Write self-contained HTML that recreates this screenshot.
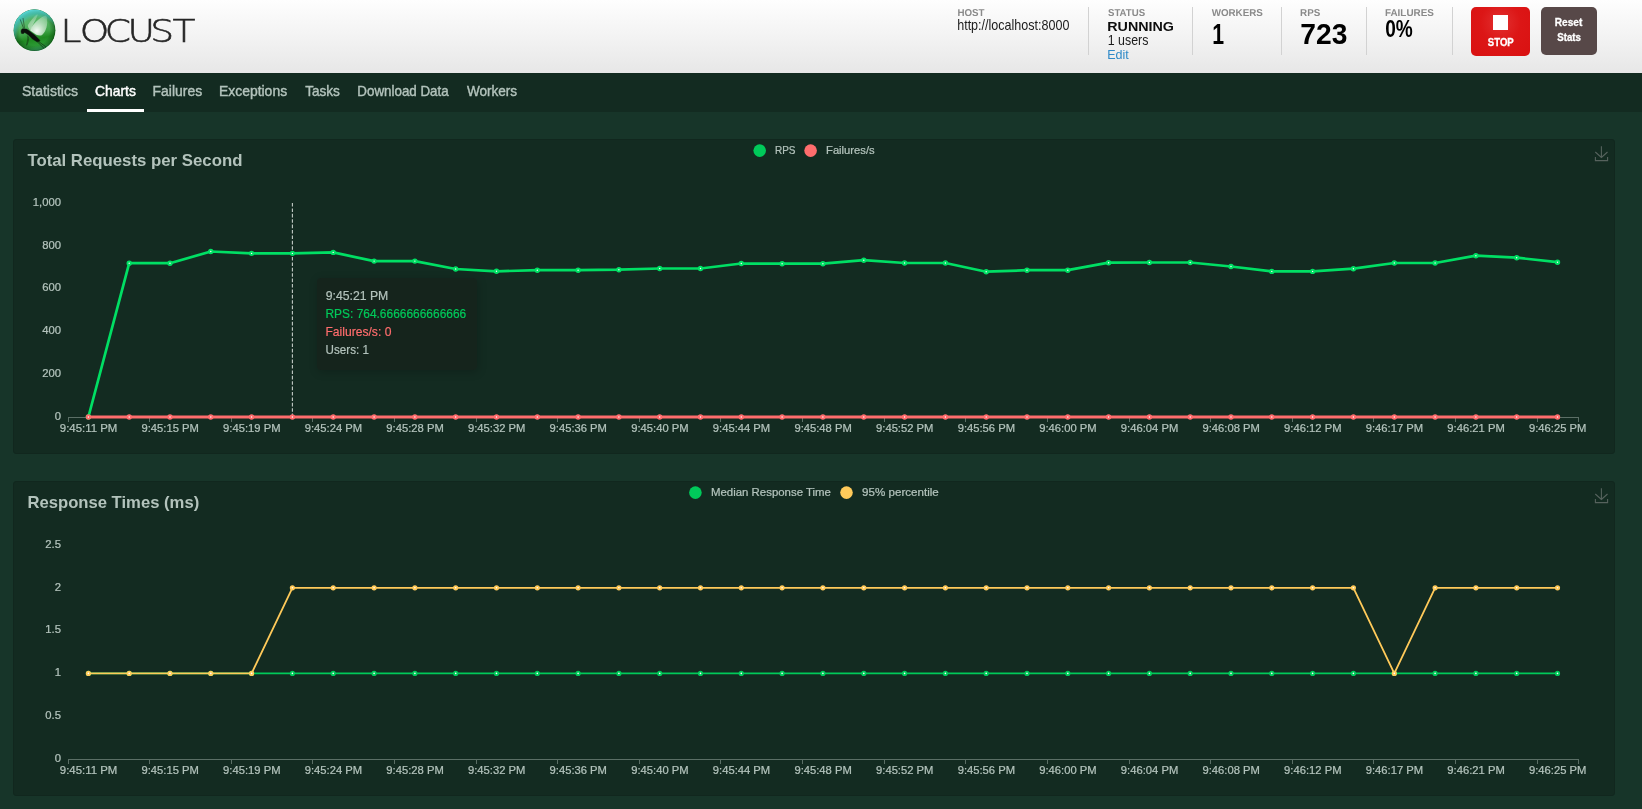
<!DOCTYPE html>
<html lang="en"><head><meta charset="utf-8"><title>Locust</title>
<style>
html,body{margin:0;padding:0}
body{width:1642px;height:809px;overflow:hidden;background:#173529;position:relative;font-family:"Liberation Sans",Arial,sans-serif;color:#000}
.abs{position:absolute;white-space:nowrap;line-height:1}
#top{position:absolute;left:0;top:0;width:1642px;height:72.5px;background:linear-gradient(to bottom,#fefefe 0%,#f4f4f4 45%,#e7e7e7 100%)}
#nav{position:absolute;left:0;top:72.5px;width:1642px;height:39.5px;background:#132b21}
.div{position:absolute;top:7px;width:1px;height:48px;background:#d2d2d2}
.panel{position:absolute;left:13px;width:1600px;height:313px;background:#132b21;border:1px solid #11271e;border-radius:3px}
svg text{font-family:"Liberation Sans",sans-serif}
svg{position:absolute;left:0;top:0}
</style></head><body>
<div id="top"></div>
<div id="nav"></div>

<!-- logo -->
<svg width="220" height="72" viewBox="0 0 220 72" style="will-change:transform">
<defs>
<linearGradient id="sph" gradientUnits="userSpaceOnUse" x1="30" y1="9" x2="38" y2="52">
<stop offset="0" stop-color="#4aa860"/><stop offset="0.3" stop-color="#58b768"/><stop offset="0.55" stop-color="#41a54a"/><stop offset="0.7" stop-color="#1f8a20"/><stop offset="0.86" stop-color="#2c9a36"/><stop offset="1" stop-color="#4fc094"/>
</linearGradient>
<radialGradient id="edge" gradientUnits="userSpaceOnUse" cx="34.6" cy="30.3" r="21"><stop offset="0.72" stop-color="#0b3d10" stop-opacity="0"/><stop offset="0.93" stop-color="#0b4a12" stop-opacity="0.45"/><stop offset="1" stop-color="#07300c" stop-opacity="0.75"/></radialGradient>
<radialGradient id="rim" gradientUnits="userSpaceOnUse" cx="38" cy="39" r="29.600"><stop offset="0.7" stop-color="#46c7c4" stop-opacity="0"/><stop offset="0.86" stop-color="#46c7c4" stop-opacity="0.7"/><stop offset="1" stop-color="#5ad6d6" stop-opacity="1"/></radialGradient>
<radialGradient id="wg" gradientUnits="userSpaceOnUse" cx="37" cy="31" r="18"><stop offset="0" stop-color="#fff" stop-opacity="0.95"/><stop offset="0.45" stop-color="#fff" stop-opacity="0.55"/><stop offset="1" stop-color="#fff" stop-opacity="0.12"/></radialGradient>
<clipPath id="cc"><circle cx="34.6" cy="30.3" r="21"/></clipPath>
</defs>
<g transform="translate(34.5 30.2) scale(0.996) translate(-34.6 -30.3)"><circle cx="34.6" cy="30.3" r="21" fill="url(#sph)"/>
<g clip-path="url(#cc)">
<circle cx="34.6" cy="30.3" r="21" fill="url(#edge)"/>
<circle cx="34.6" cy="30.3" r="21" fill="url(#rim)"/>
<path d="M30.500 31C28.500 28.500 27.600 26.500 28 25.200C30.500 21 34 16.500 37.200 14.200L37.900 14.900C36.500 18.500 34.500 22.500 32.400 26L31.500 31z" fill="url(#wg)" opacity="0.8"/>
<path d="M31 31C31.500 28.500 32.200 26.500 33.100 25.200C37 20.500 41.500 16.800 45.900 15.600C47.300 17 47.600 18.500 47.200 20.100C47.600 23.500 47.100 27 45.900 29.700C44.900 32.500 43.300 34.600 41.400 35.500C39.600 35.900 37.800 35.500 36.300 34.800z" fill="url(#wg)"/>
</g>
<path d="M21.400 29.900L22.600 28.900L26.500 29.200L28.600 30.400L35 35.400L40 40.500L39.600 41.500L37 41.900L32.600 39.200L28.200 34.800L24.800 32.700L23.200 33.800L21.500 33.500L21.100 31.600z" fill="#0a100b" stroke="#0a100b" stroke-width="0.4" stroke-linejoin="round"/>
<path d="M23.700 28.600L20.200 19.400M24.600 28.500L23.100 18.100" fill="none" stroke="#0a100b" stroke-width="0.55" opacity="0.8"/>
<path d="M27.300 35.500c1.500 3.500-0.500 6.500-0.700 10.300M28.600 36.500c0.700 3-0.700 6-1.500 8.500" fill="none" stroke="#0a100b" stroke-width="0.5" opacity="0.75"/>
<path d="M37 41.500L44 48.300M38.500 41.500L46 47" fill="none" stroke="#0a100b" stroke-width="0.65" opacity="0.85"/>
</g><text id="logotxt" transform="translate(60.4 42) scale(1.18 1)" font-size="31.85" letter-spacing="-2.71" dx="0 2.54 -1.1 -0.34 -1.44 1.44" style="font-family:'DejaVu Sans Light','DejaVu Sans',sans-serif;font-weight:200" fill="#262626" stroke="#262626" stroke-width="0.55">LOCUST</text>
</svg>

<!-- header -->
<div class="div" style="left:1088px"></div>
<div class="div" style="left:1192px"></div>
<div class="div" style="left:1281px"></div>
<div class="div" style="left:1366px"></div>
<div class="div" style="left:1452px"></div>
<div class="abs" style="left:1471px;top:7px;width:59px;height:49px;border-radius:5px;background:radial-gradient(circle at 50% 32%,#e23030 0%,#dc1616 45%,#d91111 100%)"></div>
<div class="abs" style="left:1493px;top:15px;width:15px;height:15px;background:#fff"></div>
<div class="abs" style="left:1541px;top:7px;width:56px;height:48px;border-radius:5px;background:#574848"></div>
<svg width="1642" height="72" viewBox="0 0 1642 72"><text transform="translate(957.39 15.65) scale(0.9776 1)" font-size="10.00" font-weight="bold" fill="#8a8a8a" text-rendering="geometricPrecision">HOST</text><text transform="translate(957.17 29.64) scale(0.8886 1)" font-size="14.14" fill="#1c1c1c">http://localhost:8000</text><text transform="translate(1107.96 15.75) scale(0.9648 1)" font-size="10.00" font-weight="bold" fill="#8a8a8a" text-rendering="geometricPrecision">STATUS</text><text transform="translate(1107.28 31.25) scale(1.0520 1)" font-size="13.60" font-weight="bold" fill="#0d0d0d">RUNNING</text><text transform="translate(1107.72 44.55) scale(0.8769 1)" font-size="14.14" fill="#1c1c1c">1 users</text><text transform="translate(1107.21 58.85) scale(0.9836 1)" font-size="12.77" fill="#2f8ac8">Edit</text><text transform="translate(1211.63 15.75) scale(0.9806 1)" font-size="10.00" font-weight="bold" fill="#8a8a8a" text-rendering="geometricPrecision">WORKERS</text><text transform="translate(1212.22 43.85) scale(0.7252 1)" font-size="29.36" font-weight="bold" fill="#000">1</text><text transform="translate(1300.09 15.75) scale(0.9845 1)" font-size="10.00" font-weight="bold" fill="#8a8a8a" text-rendering="geometricPrecision">RPS</text><text transform="translate(1300.35 43.55) scale(0.9287 1)" font-size="30.41" font-weight="bold" fill="#000">723</text><text transform="translate(1384.98 15.75) scale(0.9880 1)" font-size="10.00" font-weight="bold" fill="#8a8a8a" text-rendering="geometricPrecision">FAILURES</text><text transform="translate(1385.19 36.85) scale(0.8128 1)" font-size="23.49" font-weight="bold" fill="#000">0%</text><text transform="translate(1487.86 46.15) scale(0.9441 1)" font-size="10.15" font-weight="bold" fill="#fff" stroke="#fff" stroke-width="0.3">STOP</text><text transform="translate(1554.77 26.45) scale(0.9490 1)" font-size="10.65" font-weight="bold" fill="#fff" stroke="#fff" stroke-width="0.3">Reset</text><text transform="translate(1557.26 41.00) scale(0.9641 1)" font-size="10.04" font-weight="bold" fill="#fff" stroke="#fff" stroke-width="0.3">Stats</text></svg>

<!-- nav -->
<div class="abs" style="left:87px;top:109px;width:57.2px;height:3px;background:#fff"></div>
<svg width="1642" height="112" viewBox="0 0 1642 112"><text transform="translate(21.92 96.00) scale(1.0004 1)" font-size="14.00" fill="#b3c3bc" stroke="#b3c3bc" stroke-width="0.4">Statistics</text><text transform="translate(152.60 96.00) scale(0.9946 1)" font-size="14.00" fill="#b3c3bc" stroke="#b3c3bc" stroke-width="0.4">Failures</text><text transform="translate(218.90 96.00) scale(0.9963 1)" font-size="14.00" fill="#b3c3bc" stroke="#b3c3bc" stroke-width="0.4">Exceptions</text><text transform="translate(305.14 96.00) scale(0.9724 1)" font-size="14.00" fill="#b3c3bc" stroke="#b3c3bc" stroke-width="0.4">Tasks</text><text transform="translate(357.35 96.00) scale(0.9548 1)" font-size="14.00" fill="#b3c3bc" stroke="#b3c3bc" stroke-width="0.4">Download Data</text><text transform="translate(466.88 96.00) scale(0.9706 1)" font-size="14.00" fill="#b3c3bc" stroke="#b3c3bc" stroke-width="0.4">Workers</text><text transform="translate(94.96 96.00) scale(0.9915 1)" font-size="14.00" fill="#fff" stroke="#fff" stroke-width="0.45">Charts</text></svg>

<!-- panels -->
<div class="panel" style="top:139px"></div>
<div class="panel" style="top:481px"></div>

<svg width="1642" height="809" viewBox="0 0 1642 809">
<text transform="translate(27.38 165.55) scale(1.0240 1)" font-size="16.40" font-weight="bold" fill="#b3c3bc">Total Requests per Second</text><text transform="translate(27.43 507.55) scale(1.0163 1)" font-size="16.40" font-weight="bold" fill="#b3c3bc">Response Times (ms)</text><text transform="translate(774.92 154.15) scale(0.9314 1)" font-size="10.75" fill="#b3c3bc" stroke="#b3c3bc" stroke-width="0.22">RPS</text><text transform="translate(826.02 154.15) scale(1.0455 1)" font-size="10.75" fill="#b3c3bc" stroke="#b3c3bc" stroke-width="0.22">Failures/s</text><text transform="translate(711.01 496.15) scale(1.0629 1)" font-size="10.75" fill="#b3c3bc" stroke="#b3c3bc" stroke-width="0.22">Median Response Time</text><text transform="translate(862.10 496.15) scale(1.0792 1)" font-size="10.75" fill="#b3c3bc" stroke="#b3c3bc" stroke-width="0.22">95% percentile</text>
<circle cx="759.7" cy="150.6" r="6.3" fill="#00ca5a"/>
<circle cx="810.6" cy="150.6" r="6.3" fill="#ff6d6d"/>
<circle cx="695.4" cy="492.6" r="6.3" fill="#00ca5a"/>
<circle cx="846.5" cy="492.6" r="6.3" fill="#ffca5a"/>
<path d="M1601.4 146.3V157.4M1595.3 152.0L1601.4 157.4L1607.5 152.0M1595.4 157.0V160.6H1607.6V157.0" fill="none" stroke="#56625d" stroke-width="1.1"/>
<path d="M1601.4 488.3V499.4M1595.3 494.0L1601.4 499.4L1607.5 494.0M1595.4 499.0V502.6H1607.6V499.0" fill="none" stroke="#56625d" stroke-width="1.1"/>
<path d="M68 417.5H1579" stroke="#5b6f66" stroke-width="1" fill="none"/><path d="M68.5 417.5v4.5M149.5 417.5v4.5M231.5 417.5v4.5M312.5 417.5v4.5M394.5 417.5v4.5M476.5 417.5v4.5M557.5 417.5v4.5M639.5 417.5v4.5M720.5 417.5v4.5M802.5 417.5v4.5M884.5 417.5v4.5M965.5 417.5v4.5M1047.5 417.5v4.5M1129.5 417.5v4.5M1210.5 417.5v4.5M1292.5 417.5v4.5M1373.5 417.5v4.5M1455.5 417.5v4.5M1537.5 417.5v4.5M1578.5 417.5v4.5" stroke="#5b6f66" stroke-width="1" fill="none"/><text transform="translate(59.86 432.15) scale(1.0610 1)" font-size="10.75" fill="#b3c3bc" stroke="#b3c3bc" stroke-width="0.22">9:45:11 PM</text><text transform="translate(141.48 432.15) scale(1.0450 1)" font-size="10.75" fill="#b3c3bc" stroke="#b3c3bc" stroke-width="0.22">9:45:15 PM</text><text transform="translate(223.10 432.15) scale(1.0450 1)" font-size="10.75" fill="#b3c3bc" stroke="#b3c3bc" stroke-width="0.22">9:45:19 PM</text><text transform="translate(304.71 432.15) scale(1.0450 1)" font-size="10.75" fill="#b3c3bc" stroke="#b3c3bc" stroke-width="0.22">9:45:24 PM</text><text transform="translate(386.33 432.15) scale(1.0450 1)" font-size="10.75" fill="#b3c3bc" stroke="#b3c3bc" stroke-width="0.22">9:45:28 PM</text><text transform="translate(467.95 432.15) scale(1.0450 1)" font-size="10.75" fill="#b3c3bc" stroke="#b3c3bc" stroke-width="0.22">9:45:32 PM</text><text transform="translate(549.56 432.15) scale(1.0450 1)" font-size="10.75" fill="#b3c3bc" stroke="#b3c3bc" stroke-width="0.22">9:45:36 PM</text><text transform="translate(631.18 432.15) scale(1.0450 1)" font-size="10.75" fill="#b3c3bc" stroke="#b3c3bc" stroke-width="0.22">9:45:40 PM</text><text transform="translate(712.79 432.15) scale(1.0450 1)" font-size="10.75" fill="#b3c3bc" stroke="#b3c3bc" stroke-width="0.22">9:45:44 PM</text><text transform="translate(794.41 432.15) scale(1.0450 1)" font-size="10.75" fill="#b3c3bc" stroke="#b3c3bc" stroke-width="0.22">9:45:48 PM</text><text transform="translate(876.03 432.15) scale(1.0450 1)" font-size="10.75" fill="#b3c3bc" stroke="#b3c3bc" stroke-width="0.22">9:45:52 PM</text><text transform="translate(957.64 432.15) scale(1.0450 1)" font-size="10.75" fill="#b3c3bc" stroke="#b3c3bc" stroke-width="0.22">9:45:56 PM</text><text transform="translate(1039.26 432.15) scale(1.0450 1)" font-size="10.75" fill="#b3c3bc" stroke="#b3c3bc" stroke-width="0.22">9:46:00 PM</text><text transform="translate(1120.87 432.15) scale(1.0450 1)" font-size="10.75" fill="#b3c3bc" stroke="#b3c3bc" stroke-width="0.22">9:46:04 PM</text><text transform="translate(1202.49 432.15) scale(1.0450 1)" font-size="10.75" fill="#b3c3bc" stroke="#b3c3bc" stroke-width="0.22">9:46:08 PM</text><text transform="translate(1284.11 432.15) scale(1.0450 1)" font-size="10.75" fill="#b3c3bc" stroke="#b3c3bc" stroke-width="0.22">9:46:12 PM</text><text transform="translate(1365.72 432.15) scale(1.0450 1)" font-size="10.75" fill="#b3c3bc" stroke="#b3c3bc" stroke-width="0.22">9:46:17 PM</text><text transform="translate(1447.34 432.15) scale(1.0450 1)" font-size="10.75" fill="#b3c3bc" stroke="#b3c3bc" stroke-width="0.22">9:46:21 PM</text><text transform="translate(1528.95 432.15) scale(1.0450 1)" font-size="10.75" fill="#b3c3bc" stroke="#b3c3bc" stroke-width="0.22">9:46:25 PM</text><text transform="translate(61.0 205.8) scale(1.05 1)" text-anchor="end" font-size="10.75" fill="#b3c3bc" stroke="#b3c3bc" stroke-width="0.22">1,000</text><text transform="translate(61.0 248.6) scale(1.05 1)" text-anchor="end" font-size="10.75" fill="#b3c3bc" stroke="#b3c3bc" stroke-width="0.22">800</text><text transform="translate(61.0 291.4) scale(1.05 1)" text-anchor="end" font-size="10.75" fill="#b3c3bc" stroke="#b3c3bc" stroke-width="0.22">600</text><text transform="translate(61.0 334.2) scale(1.05 1)" text-anchor="end" font-size="10.75" fill="#b3c3bc" stroke="#b3c3bc" stroke-width="0.22">400</text><text transform="translate(61.0 377.0) scale(1.05 1)" text-anchor="end" font-size="10.75" fill="#b3c3bc" stroke="#b3c3bc" stroke-width="0.22">200</text><text transform="translate(61.0 419.8) scale(1.05 1)" text-anchor="end" font-size="10.75" fill="#b3c3bc" stroke="#b3c3bc" stroke-width="0.22">0</text><path d="M292.4 203V417" stroke="#c4cbc7" stroke-width="1.1" stroke-dasharray="3.6 1.8" fill="none"/><polyline points="88.4,417.0 129.2,263.2 170.0,263.2 210.8,251.5 251.6,253.4 292.4,253.4 333.2,252.4 374.1,261.1 414.9,261.1 455.7,269.0 496.5,271.3 537.3,270.2 578.1,270.2 618.9,269.7 659.7,268.5 700.5,268.5 741.3,263.5 782.1,263.7 822.9,263.7 863.8,260.2 904.6,263.0 945.4,263.0 986.2,271.7 1027.0,270.2 1067.8,270.2 1108.6,262.7 1149.4,262.5 1190.2,262.5 1231.0,266.5 1271.8,271.4 1312.6,271.4 1353.4,268.7 1394.3,263.0 1435.1,263.0 1475.9,255.7 1516.7,257.7 1557.5,262.2" fill="none" stroke="#00df64" stroke-width="2.7" stroke-linejoin="bevel"/><polyline points="88.4,417.0 129.2,417.0 170.0,417.0 210.8,417.0 251.6,417.0 292.4,417.0 333.2,417.0 374.1,417.0 414.9,417.0 455.7,417.0 496.5,417.0 537.3,417.0 578.1,417.0 618.9,417.0 659.7,417.0 700.5,417.0 741.3,417.0 782.1,417.0 822.9,417.0 863.8,417.0 904.6,417.0 945.4,417.0 986.2,417.0 1027.0,417.0 1067.8,417.0 1108.6,417.0 1149.4,417.0 1190.2,417.0 1231.0,417.0 1271.8,417.0 1312.6,417.0 1353.4,417.0 1394.3,417.0 1435.1,417.0 1475.9,417.0 1516.7,417.0 1557.5,417.0" fill="none" stroke="#ff6d6d" stroke-width="2.8"/><g fill="#fff" stroke="#00df64" stroke-width="2.0"><circle cx="88.4" cy="417.0" r="1.7"/><circle cx="129.2" cy="263.2" r="1.7"/><circle cx="170.0" cy="263.2" r="1.7"/><circle cx="210.8" cy="251.5" r="1.7"/><circle cx="251.6" cy="253.4" r="1.7"/><circle cx="292.4" cy="253.4" r="1.7"/><circle cx="333.2" cy="252.4" r="1.7"/><circle cx="374.1" cy="261.1" r="1.7"/><circle cx="414.9" cy="261.1" r="1.7"/><circle cx="455.7" cy="269.0" r="1.7"/><circle cx="496.5" cy="271.3" r="1.7"/><circle cx="537.3" cy="270.2" r="1.7"/><circle cx="578.1" cy="270.2" r="1.7"/><circle cx="618.9" cy="269.7" r="1.7"/><circle cx="659.7" cy="268.5" r="1.7"/><circle cx="700.5" cy="268.5" r="1.7"/><circle cx="741.3" cy="263.5" r="1.7"/><circle cx="782.1" cy="263.7" r="1.7"/><circle cx="822.9" cy="263.7" r="1.7"/><circle cx="863.8" cy="260.2" r="1.7"/><circle cx="904.6" cy="263.0" r="1.7"/><circle cx="945.4" cy="263.0" r="1.7"/><circle cx="986.2" cy="271.7" r="1.7"/><circle cx="1027.0" cy="270.2" r="1.7"/><circle cx="1067.8" cy="270.2" r="1.7"/><circle cx="1108.6" cy="262.7" r="1.7"/><circle cx="1149.4" cy="262.5" r="1.7"/><circle cx="1190.2" cy="262.5" r="1.7"/><circle cx="1231.0" cy="266.5" r="1.7"/><circle cx="1271.8" cy="271.4" r="1.7"/><circle cx="1312.6" cy="271.4" r="1.7"/><circle cx="1353.4" cy="268.7" r="1.7"/><circle cx="1394.3" cy="263.0" r="1.7"/><circle cx="1435.1" cy="263.0" r="1.7"/><circle cx="1475.9" cy="255.7" r="1.7"/><circle cx="1516.7" cy="257.7" r="1.7"/><circle cx="1557.5" cy="262.2" r="1.7"/></g><g fill="#fff" stroke="#ff6d6d" stroke-width="2.0"><circle cx="88.4" cy="417.0" r="1.7"/><circle cx="129.2" cy="417.0" r="1.7"/><circle cx="170.0" cy="417.0" r="1.7"/><circle cx="210.8" cy="417.0" r="1.7"/><circle cx="251.6" cy="417.0" r="1.7"/><circle cx="292.4" cy="417.0" r="1.7"/><circle cx="333.2" cy="417.0" r="1.7"/><circle cx="374.1" cy="417.0" r="1.7"/><circle cx="414.9" cy="417.0" r="1.7"/><circle cx="455.7" cy="417.0" r="1.7"/><circle cx="496.5" cy="417.0" r="1.7"/><circle cx="537.3" cy="417.0" r="1.7"/><circle cx="578.1" cy="417.0" r="1.7"/><circle cx="618.9" cy="417.0" r="1.7"/><circle cx="659.7" cy="417.0" r="1.7"/><circle cx="700.5" cy="417.0" r="1.7"/><circle cx="741.3" cy="417.0" r="1.7"/><circle cx="782.1" cy="417.0" r="1.7"/><circle cx="822.9" cy="417.0" r="1.7"/><circle cx="863.8" cy="417.0" r="1.7"/><circle cx="904.6" cy="417.0" r="1.7"/><circle cx="945.4" cy="417.0" r="1.7"/><circle cx="986.2" cy="417.0" r="1.7"/><circle cx="1027.0" cy="417.0" r="1.7"/><circle cx="1067.8" cy="417.0" r="1.7"/><circle cx="1108.6" cy="417.0" r="1.7"/><circle cx="1149.4" cy="417.0" r="1.7"/><circle cx="1190.2" cy="417.0" r="1.7"/><circle cx="1231.0" cy="417.0" r="1.7"/><circle cx="1271.8" cy="417.0" r="1.7"/><circle cx="1312.6" cy="417.0" r="1.7"/><circle cx="1353.4" cy="417.0" r="1.7"/><circle cx="1394.3" cy="417.0" r="1.7"/><circle cx="1435.1" cy="417.0" r="1.7"/><circle cx="1475.9" cy="417.0" r="1.7"/><circle cx="1516.7" cy="417.0" r="1.7"/><circle cx="1557.5" cy="417.0" r="1.7"/></g>
<path d="M68 759.5H1579" stroke="#5b6f66" stroke-width="1" fill="none"/><path d="M68.5 759.5v4.5M149.5 759.5v4.5M231.5 759.5v4.5M312.5 759.5v4.5M394.5 759.5v4.5M476.5 759.5v4.5M557.5 759.5v4.5M639.5 759.5v4.5M720.5 759.5v4.5M802.5 759.5v4.5M884.5 759.5v4.5M965.5 759.5v4.5M1047.5 759.5v4.5M1129.5 759.5v4.5M1210.5 759.5v4.5M1292.5 759.5v4.5M1373.5 759.5v4.5M1455.5 759.5v4.5M1537.5 759.5v4.5M1578.5 759.5v4.5" stroke="#5b6f66" stroke-width="1" fill="none"/><text transform="translate(59.86 774.15) scale(1.0610 1)" font-size="10.75" fill="#b3c3bc" stroke="#b3c3bc" stroke-width="0.22">9:45:11 PM</text><text transform="translate(141.48 774.15) scale(1.0450 1)" font-size="10.75" fill="#b3c3bc" stroke="#b3c3bc" stroke-width="0.22">9:45:15 PM</text><text transform="translate(223.10 774.15) scale(1.0450 1)" font-size="10.75" fill="#b3c3bc" stroke="#b3c3bc" stroke-width="0.22">9:45:19 PM</text><text transform="translate(304.71 774.15) scale(1.0450 1)" font-size="10.75" fill="#b3c3bc" stroke="#b3c3bc" stroke-width="0.22">9:45:24 PM</text><text transform="translate(386.33 774.15) scale(1.0450 1)" font-size="10.75" fill="#b3c3bc" stroke="#b3c3bc" stroke-width="0.22">9:45:28 PM</text><text transform="translate(467.95 774.15) scale(1.0450 1)" font-size="10.75" fill="#b3c3bc" stroke="#b3c3bc" stroke-width="0.22">9:45:32 PM</text><text transform="translate(549.56 774.15) scale(1.0450 1)" font-size="10.75" fill="#b3c3bc" stroke="#b3c3bc" stroke-width="0.22">9:45:36 PM</text><text transform="translate(631.18 774.15) scale(1.0450 1)" font-size="10.75" fill="#b3c3bc" stroke="#b3c3bc" stroke-width="0.22">9:45:40 PM</text><text transform="translate(712.79 774.15) scale(1.0450 1)" font-size="10.75" fill="#b3c3bc" stroke="#b3c3bc" stroke-width="0.22">9:45:44 PM</text><text transform="translate(794.41 774.15) scale(1.0450 1)" font-size="10.75" fill="#b3c3bc" stroke="#b3c3bc" stroke-width="0.22">9:45:48 PM</text><text transform="translate(876.03 774.15) scale(1.0450 1)" font-size="10.75" fill="#b3c3bc" stroke="#b3c3bc" stroke-width="0.22">9:45:52 PM</text><text transform="translate(957.64 774.15) scale(1.0450 1)" font-size="10.75" fill="#b3c3bc" stroke="#b3c3bc" stroke-width="0.22">9:45:56 PM</text><text transform="translate(1039.26 774.15) scale(1.0450 1)" font-size="10.75" fill="#b3c3bc" stroke="#b3c3bc" stroke-width="0.22">9:46:00 PM</text><text transform="translate(1120.87 774.15) scale(1.0450 1)" font-size="10.75" fill="#b3c3bc" stroke="#b3c3bc" stroke-width="0.22">9:46:04 PM</text><text transform="translate(1202.49 774.15) scale(1.0450 1)" font-size="10.75" fill="#b3c3bc" stroke="#b3c3bc" stroke-width="0.22">9:46:08 PM</text><text transform="translate(1284.11 774.15) scale(1.0450 1)" font-size="10.75" fill="#b3c3bc" stroke="#b3c3bc" stroke-width="0.22">9:46:12 PM</text><text transform="translate(1365.72 774.15) scale(1.0450 1)" font-size="10.75" fill="#b3c3bc" stroke="#b3c3bc" stroke-width="0.22">9:46:17 PM</text><text transform="translate(1447.34 774.15) scale(1.0450 1)" font-size="10.75" fill="#b3c3bc" stroke="#b3c3bc" stroke-width="0.22">9:46:21 PM</text><text transform="translate(1528.95 774.15) scale(1.0450 1)" font-size="10.75" fill="#b3c3bc" stroke="#b3c3bc" stroke-width="0.22">9:46:25 PM</text><text transform="translate(61.0 547.8) scale(1.05 1)" text-anchor="end" font-size="10.75" fill="#b3c3bc" stroke="#b3c3bc" stroke-width="0.22">2.5</text><text transform="translate(61.0 590.6) scale(1.05 1)" text-anchor="end" font-size="10.75" fill="#b3c3bc" stroke="#b3c3bc" stroke-width="0.22">2</text><text transform="translate(61.0 633.4) scale(1.05 1)" text-anchor="end" font-size="10.75" fill="#b3c3bc" stroke="#b3c3bc" stroke-width="0.22">1.5</text><text transform="translate(61.0 676.2) scale(1.05 1)" text-anchor="end" font-size="10.75" fill="#b3c3bc" stroke="#b3c3bc" stroke-width="0.22">1</text><text transform="translate(61.0 719.0) scale(1.05 1)" text-anchor="end" font-size="10.75" fill="#b3c3bc" stroke="#b3c3bc" stroke-width="0.22">0.5</text><text transform="translate(61.0 761.8) scale(1.05 1)" text-anchor="end" font-size="10.75" fill="#b3c3bc" stroke="#b3c3bc" stroke-width="0.22">0</text><polyline points="88.4,673.4 129.2,673.4 170.0,673.4 210.8,673.4 251.6,673.4 292.4,673.4 333.2,673.4 374.1,673.4 414.9,673.4 455.7,673.4 496.5,673.4 537.3,673.4 578.1,673.4 618.9,673.4 659.7,673.4 700.5,673.4 741.3,673.4 782.1,673.4 822.9,673.4 863.8,673.4 904.6,673.4 945.4,673.4 986.2,673.4 1027.0,673.4 1067.8,673.4 1108.6,673.4 1149.4,673.4 1190.2,673.4 1231.0,673.4 1271.8,673.4 1312.6,673.4 1353.4,673.4 1394.3,673.4 1435.1,673.4 1475.9,673.4 1516.7,673.4 1557.5,673.4" fill="none" stroke="#00ca5a" stroke-width="1.8"/><g fill="#fff" stroke="#00ca5a" stroke-width="1.8"><circle cx="88.4" cy="673.4" r="1.7"/><circle cx="129.2" cy="673.4" r="1.7"/><circle cx="170.0" cy="673.4" r="1.7"/><circle cx="210.8" cy="673.4" r="1.7"/><circle cx="251.6" cy="673.4" r="1.7"/><circle cx="292.4" cy="673.4" r="1.7"/><circle cx="333.2" cy="673.4" r="1.7"/><circle cx="374.1" cy="673.4" r="1.7"/><circle cx="414.9" cy="673.4" r="1.7"/><circle cx="455.7" cy="673.4" r="1.7"/><circle cx="496.5" cy="673.4" r="1.7"/><circle cx="537.3" cy="673.4" r="1.7"/><circle cx="578.1" cy="673.4" r="1.7"/><circle cx="618.9" cy="673.4" r="1.7"/><circle cx="659.7" cy="673.4" r="1.7"/><circle cx="700.5" cy="673.4" r="1.7"/><circle cx="741.3" cy="673.4" r="1.7"/><circle cx="782.1" cy="673.4" r="1.7"/><circle cx="822.9" cy="673.4" r="1.7"/><circle cx="863.8" cy="673.4" r="1.7"/><circle cx="904.6" cy="673.4" r="1.7"/><circle cx="945.4" cy="673.4" r="1.7"/><circle cx="986.2" cy="673.4" r="1.7"/><circle cx="1027.0" cy="673.4" r="1.7"/><circle cx="1067.8" cy="673.4" r="1.7"/><circle cx="1108.6" cy="673.4" r="1.7"/><circle cx="1149.4" cy="673.4" r="1.7"/><circle cx="1190.2" cy="673.4" r="1.7"/><circle cx="1231.0" cy="673.4" r="1.7"/><circle cx="1271.8" cy="673.4" r="1.7"/><circle cx="1312.6" cy="673.4" r="1.7"/><circle cx="1353.4" cy="673.4" r="1.7"/><circle cx="1394.3" cy="673.4" r="1.7"/><circle cx="1435.1" cy="673.4" r="1.7"/><circle cx="1475.9" cy="673.4" r="1.7"/><circle cx="1516.7" cy="673.4" r="1.7"/><circle cx="1557.5" cy="673.4" r="1.7"/></g><polyline points="88.4,673.4 129.2,673.4 170.0,673.4 210.8,673.4 251.6,673.4 292.4,587.8 333.2,587.8 374.1,587.8 414.9,587.8 455.7,587.8 496.5,587.8 537.3,587.8 578.1,587.8 618.9,587.8 659.7,587.8 700.5,587.8 741.3,587.8 782.1,587.8 822.9,587.8 863.8,587.8 904.6,587.8 945.4,587.8 986.2,587.8 1027.0,587.8 1067.8,587.8 1108.6,587.8 1149.4,587.8 1190.2,587.8 1231.0,587.8 1271.8,587.8 1312.6,587.8 1353.4,587.8 1394.3,673.4 1435.1,587.8 1475.9,587.8 1516.7,587.8 1557.5,587.8" fill="none" stroke="#ffca5a" stroke-width="1.8" stroke-linejoin="bevel"/><g fill="#fff" stroke="#ffca5a" stroke-width="1.8"><circle cx="88.4" cy="673.4" r="1.7"/><circle cx="129.2" cy="673.4" r="1.7"/><circle cx="170.0" cy="673.4" r="1.7"/><circle cx="210.8" cy="673.4" r="1.7"/><circle cx="251.6" cy="673.4" r="1.7"/><circle cx="292.4" cy="587.8" r="1.7"/><circle cx="333.2" cy="587.8" r="1.7"/><circle cx="374.1" cy="587.8" r="1.7"/><circle cx="414.9" cy="587.8" r="1.7"/><circle cx="455.7" cy="587.8" r="1.7"/><circle cx="496.5" cy="587.8" r="1.7"/><circle cx="537.3" cy="587.8" r="1.7"/><circle cx="578.1" cy="587.8" r="1.7"/><circle cx="618.9" cy="587.8" r="1.7"/><circle cx="659.7" cy="587.8" r="1.7"/><circle cx="700.5" cy="587.8" r="1.7"/><circle cx="741.3" cy="587.8" r="1.7"/><circle cx="782.1" cy="587.8" r="1.7"/><circle cx="822.9" cy="587.8" r="1.7"/><circle cx="863.8" cy="587.8" r="1.7"/><circle cx="904.6" cy="587.8" r="1.7"/><circle cx="945.4" cy="587.8" r="1.7"/><circle cx="986.2" cy="587.8" r="1.7"/><circle cx="1027.0" cy="587.8" r="1.7"/><circle cx="1067.8" cy="587.8" r="1.7"/><circle cx="1108.6" cy="587.8" r="1.7"/><circle cx="1149.4" cy="587.8" r="1.7"/><circle cx="1190.2" cy="587.8" r="1.7"/><circle cx="1231.0" cy="587.8" r="1.7"/><circle cx="1271.8" cy="587.8" r="1.7"/><circle cx="1312.6" cy="587.8" r="1.7"/><circle cx="1353.4" cy="587.8" r="1.7"/><circle cx="1394.3" cy="673.4" r="1.7"/><circle cx="1435.1" cy="587.8" r="1.7"/><circle cx="1475.9" cy="587.8" r="1.7"/><circle cx="1516.7" cy="587.8" r="1.7"/><circle cx="1557.5" cy="587.8" r="1.7"/></g>
</svg>

<!-- tooltip -->
<div class="abs" style="left:316.500px;top:278px;width:160.500px;height:91.500px;border-radius:4px;background:rgba(21,35,28,0.93);box-shadow:1px 2px 10px rgba(0,0,0,0.2)"></div>
<svg width="1642" height="809" viewBox="0 0 1642 809"><text transform="translate(325.67 299.65) scale(0.9805 1)" font-size="12.50" fill="#b3c3bc" stroke="#b3c3bc" stroke-width="0.2">9:45:21 PM</text><text transform="translate(325.46 317.55) scale(0.9555 1)" font-size="12.50" fill="#00ca5a" stroke="#00ca5a" stroke-width="0.2">RPS: 764.6666666666666</text><text transform="translate(325.45 335.55) scale(0.9690 1)" font-size="12.50" fill="#ff6d6d" stroke="#ff6d6d" stroke-width="0.2">Failures/s: 0</text><text transform="translate(325.55 353.65) scale(0.9318 1)" font-size="12.50" fill="#b3c3bc" stroke="#b3c3bc" stroke-width="0.2">Users: 1</text></svg>
</body></html>
